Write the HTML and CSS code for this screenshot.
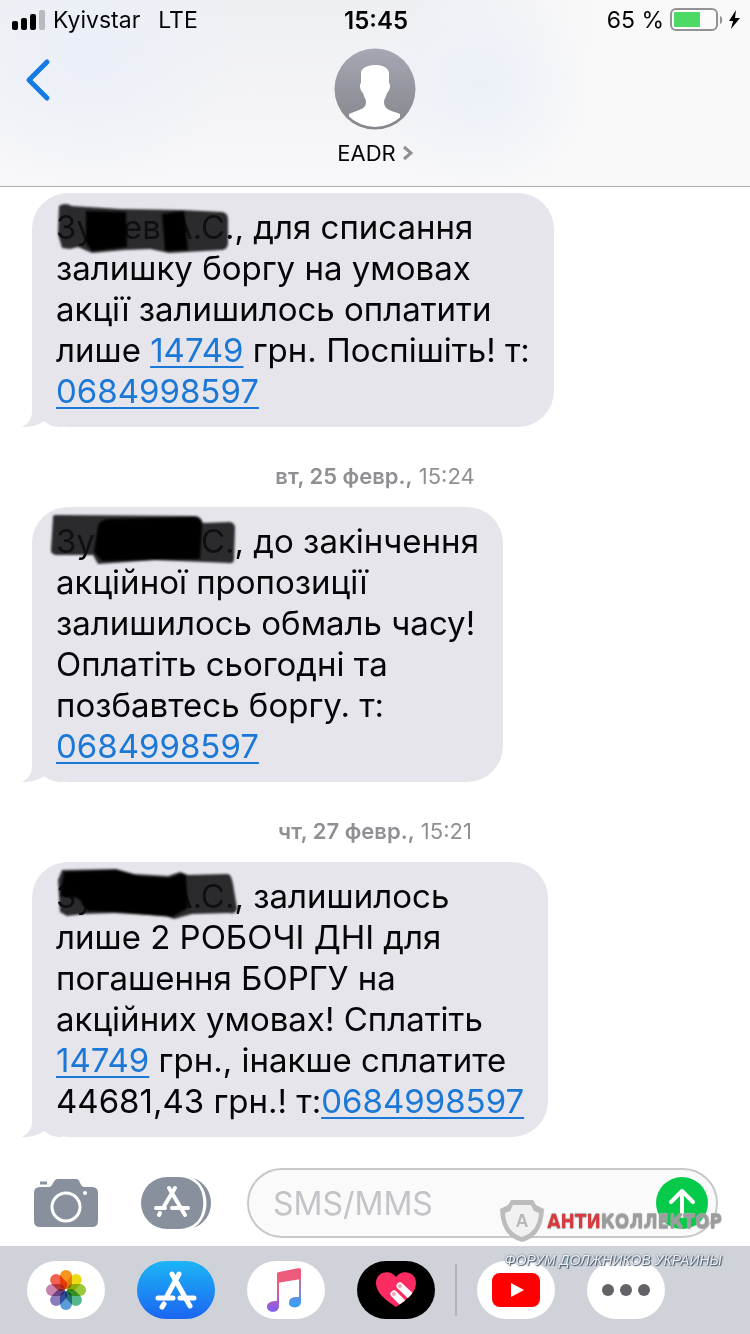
FILE: index.html
```html
<!DOCTYPE html>
<html lang="uk">
<head>
    <meta charset="UTF-8">
    <meta name="viewport" content="width=device-width, initial-scale=1.0">
    <title>EADR</title>
    <link rel="stylesheet" href="styles.css">
</head>
<body>

    <header class="header">
        <div class="status-bar">
            <div class="status-left">
                <svg class="signal" width="33" height="20" viewBox="0 0 33 20">
                    <rect x="0" y="11" width="6" height="9" rx="2"/>
                    <rect x="9" y="8" width="6" height="12" rx="2"/>
                    <rect x="18" y="4" width="6" height="16" rx="2"/>
                    <rect x="27" y="0" width="6" height="20" rx="2" fill="#b9babd"/>
                </svg>
                <span>Kyivstar</span>
                <span class="network">LTE</span>
            </div>
            <div class="status-time">15:45</div>
            <div class="status-right">
                <span>65 %</span>
                <svg width="70" height="24" viewBox="0 0 70 24">
                    <rect x="1" y="1" width="46" height="21" rx="5" fill="#fbfbfb" stroke="#939396" stroke-width="2"/>
                    <rect x="4" y="4" width="26" height="15" rx="1" fill="#4cd964"/>
                    <path d="M50 8c3 1 3 7 0 8z" fill="#939396"/>
                    <path d="M66 2l-7 11h4l-2 8 9-11h-5z"/>
                </svg>
            </div>
        </div>
        <div class="nav">
            <button class="back" aria-label="Назад">
                <svg width="26" height="44" viewBox="0 0 26 44"><path d="M22 4L4 22l18 18" fill="none" stroke="#147ae6" stroke-width="5" stroke-linecap="round" stroke-linejoin="round"/></svg>
            </button>
            <a class="contact" href="#">
                <svg width="82" height="82" viewBox="0 0 82 82">
                    <defs>
                        <linearGradient id="avatar" x1="0" y1="0" x2="0" y2="1">
                            <stop offset="0" stop-color="#a5a7b3"/>
                            <stop offset="1" stop-color="#85868c"/>
                        </linearGradient>
                        <clipPath id="avatarClip"><circle cx="41" cy="41" r="38"/></clipPath>
                    </defs>
                    <circle cx="41" cy="41" r="40.5" fill="url(#avatar)"/>
                    <path clip-path="url(#avatarClip)" fill="#fff" d="M27 24c2-9 27-10 28 1v10c2 1 1 8-2 10-1 4-3 6-3 9 0 7 5 8 16 12v17H15V66c12-5 17-5 17-12 0-3-2-5-3-9-3-2-4-9-2-10z"/>
                </svg>
                <span class="contact-name">EADR
                    <svg width="11" height="16" viewBox="0 0 11 16"><path d="M2 2l7 6-7 6" fill="none" stroke="#8e8e93" stroke-width="3"/></svg>
                </span>
            </a>
        </div>
    </header>

    <main class="messages">
        <div class="bubble">
            <svg class="tail" width="40" height="34" viewBox="0 0 40 34"><path d="M10 0v19c0 7-4 12-10 15 8 0 15-1 22-6 5 4 10 6 18 6V0z" fill="#e6e5eb"/></svg>
            <span class="name"><span>Зу</span><span>ев А.С.,</span>
                <svg class="marker" width="190" height="60" viewBox="0 0 190 60">
                    <path class="ink" d="M9 7Q15 3 22 7L70 10 132 11 172 13Q178 14 178 20V45Q177 51 171 51L119 54 100 50 74 51 42 54 28 48 20 50 12 49 8 35z"/>
                    <path class="ink-dark" d="M36 12L76 13 77 48 42 52 36 44zM112 15L134 12 138 51 115 52z"/>
                </svg></span> для списання<br>
            залишку боргу на умовах<br>
            акції залишилось оплатити<br>
            лише <a href="#">14749</a> грн. Поспішіть! т:<br>
            <a href="tel:0684998597">0684998597</a>
        </div>

        <time class="date"><b>вт, 25 февр.,</b> 15:24</time>

        <div class="bubble">
            <svg class="tail" width="40" height="34" viewBox="0 0 40 34"><path d="M10 0v19c0 7-4 12-10 15 8 0 15-1 22-6 5 4 10 6 18 6V0z" fill="#e6e5eb"/></svg>
            <span class="name"><span>Зу</span><span>С.,</span>
                <svg class="marker" width="190" height="60" viewBox="0 0 190 60">
                    <path class="ink" d="M3 5Q2 2 6 2L146 3Q151 4 153 10L180 9Q185 10 185 15L184 47Q183 51 178 50L105 47 48 51 43 42 6 42Q0 41 1 36z"/>
                    <path class="ink-dark" d="M48 13Q49 7 60 6L145 4Q152 6 152 12L150 46 52 48 44 39z"/>
                </svg></span> до закінчення<br>
            акційної пропозиції<br>
            залишилось обмаль часу!<br>
            Оплатіть сьогодні та<br>
            позбавтесь боргу. т:<br>
            <a href="tel:0684998597">0684998597</a>
        </div>

        <time class="date"><b>чт, 27 февр.,</b> 15:21</time>

        <div class="bubble">
            <svg class="tail" width="40" height="34" viewBox="0 0 40 34"><path d="M10 0v19c0 7-4 12-10 15 8 0 15-1 22-6 5 4 10 6 18 6V0z" fill="#e6e5eb"/></svg>
            <span class="name"><span>Зу</span><span>А.С.,</span>
                <svg class="marker" width="190" height="60" viewBox="0 0 190 60">
                    <path class="ink" d="M12 2L66 1 84 6 118 8 130 4 138 7 178 6Q181 6 183 16L187 40Q187 47 178 45L142 46 124 51 116 48 64 45 34 46 17 48 10 44 8 12z"/>
                    <path class="ink-dark" d="M14 4L66 2 88 8 120 10 132 5 136 8 138 40 122 49 65 44 38 43 28 30 10 28z"/>
                </svg></span> залишилось<br>
            лише 2 РОБОЧІ ДНІ для<br>
            погашення БОРГУ на<br>
            акційних умовах! Сплатіть<br>
            <a href="#">14749</a> грн., інакше сплатите<br>
            44681,43 грн.! т:<a href="tel:0684998597">0684998597</a>
        </div>
    </main>

    <footer class="footer">
        <form class="compose">
            <button type="button" class="icon-button" aria-label="Камера">
                <svg width="64" height="50" viewBox="0 0 64 50">
                    <path fill="#87909c" d="M6 9h9c4 0 4-8 9-8h18c5 0 3 8 9 8h7q6 0 6 6v28q0 6-6 6H6q-6 0-6-6V15q0-6 6-6z"/>
                    <path d="M6 5h7" stroke="#87909c" stroke-width="3"/>
                    <circle cx="32" cy="29" r="14" fill="none" stroke="#fff" stroke-width="3"/>
                    <circle cx="51" cy="15" r="2" fill="#fff"/>
                </svg>
            </button>
            <button type="button" class="icon-button" aria-label="Приложения">
                <svg width="70" height="52" viewBox="0 0 70 52">
                    <rect width="64" height="52" rx="26" fill="#87909c"/>
                    <path d="M50 0c19 8 19 44 0 52" fill="none" stroke="#fff" stroke-width="4"/>
                    <path d="M52 1c24 8 24 42 0 50 18-10 18-40 0-50z" fill="#87909c"/>
                    <path d="M34 11L22 31M28 11l16 27M15 31h9M31 31h16M19 36l-1 2" fill="none" stroke="#fff" stroke-width="4" stroke-linecap="round"/>
                </svg>
            </button>
            <div class="field">
                <input type="text" placeholder="SMS/MMS" aria-label="SMS/MMS">
                <button type="button" class="send" aria-label="Отправить">
                    <svg width="28" height="30" viewBox="0 0 28 30"><path d="M14 28V3M3 14L14 3l11 11" fill="none" stroke="#fff" stroke-width="4" stroke-linecap="round" stroke-linejoin="round"/></svg>
                </button>
            </div>
        </form>

        <nav class="apps">
            <button class="app" aria-label="Фото">
                <svg width="42" height="42" viewBox="-21 -21 42 42">
                    <g class="petals">
                        <rect x="-6" y="-20" width="12" height="19" rx="6" fill="#f7941d"/>
                        <rect x="-6" y="-20" width="12" height="19" rx="6" fill="#ecdb12" transform="rotate(45)"/>
                        <rect x="-6" y="-20" width="12" height="19" rx="6" fill="#98c93c" transform="rotate(90)"/>
                        <rect x="-6" y="-20" width="12" height="19" rx="6" fill="#56b78b" transform="rotate(135)"/>
                        <rect x="-6" y="-20" width="12" height="19" rx="6" fill="#5b9bd8" transform="rotate(180)"/>
                        <rect x="-6" y="-20" width="12" height="19" rx="6" fill="#8b7dbd" transform="rotate(225)"/>
                        <rect x="-6" y="-20" width="12" height="19" rx="6" fill="#c684b1" transform="rotate(270)"/>
                        <rect x="-6" y="-20" width="12" height="19" rx="6" fill="#ef6350" transform="rotate(315)"/>
                    </g>
                </svg>
            </button>
            <button class="app app-store" aria-label="App Store">
                <svg width="44" height="40" viewBox="0 0 44 40"><path d="M25 4L13 26M18 4l18 32M4 28h15M26 28h14M10 34l-2 3" fill="none" stroke="#fff" stroke-width="5" stroke-linecap="round"/></svg>
            </button>
            <button class="app" aria-label="Музыка">
                <svg width="38" height="46" viewBox="0 0 38 46">
                    <defs>
                        <linearGradient id="noteLeft" x1="0" y1="0" x2="0" y2="1">
                            <stop offset="0.3" stop-color="#ee5c7c"/>
                            <stop offset="1" stop-color="#7c5df5"/>
                        </linearGradient>
                        <linearGradient id="noteRight" x1="0" y1="0" x2="0" y2="1">
                            <stop offset="0.2" stop-color="#d8649c"/>
                            <stop offset="0.9" stop-color="#3d9df0"/>
                        </linearGradient>
                    </defs>
                    <path d="M10 6h2v33c0 8-12 7-12 1 0-5 5-6 10-6z" fill="url(#noteLeft)"/>
                    <path d="M32 2h2v33c0 7-12 7-12 1 0-6 5-6 10-6z" fill="url(#noteRight)"/>
                    <path d="M10 7q0-2 2-2l20-4q2 0 2 2v9l-24 4z" fill="#ee5c7c"/>
                </svg>
            </button>
            <button class="app digital-touch" aria-label="Digital Touch">
                <svg width="44" height="38" viewBox="0 0 44 38">
                    <defs><clipPath id="heart"><path d="M22 36C10 28 2 21 2 12 2 0 17-2 22 6c5-8 20-6 20 6 0 9-8 16-20 24z"/></clipPath></defs>
                    <g clip-path="url(#heart)">
                        <path d="M0 0h44v38H0z" fill="#fc2c63"/>
                        <path d="M26 15l18 17M20 23l16 16" stroke="#fff" stroke-width="7" stroke-linecap="round"/>
                        <circle cx="26" cy="15" r="2" fill="#f5a3b7"/>
                        <circle cx="20" cy="23" r="2" fill="#f5a3b7"/>
                    </g>
                </svg>
            </button>
            <span class="divider"></span>
            <button class="app" aria-label="YouTube">
                <svg width="48" height="34" viewBox="0 0 48 34"><rect width="48" height="34" rx="8" fill="#f00"/><path d="M19 10l13 7-13 7z" fill="#fff"/></svg>
            </button>
            <button class="app" aria-label="Ещё">
                <svg width="48" height="12" viewBox="0 0 48 12" fill="#636367"><circle cx="6" cy="6" r="6"/><circle cx="24" cy="6" r="6"/><circle cx="42" cy="6" r="6"/></svg>
            </button>
        </nav>

        <div class="watermark">
            <div class="watermark-title">
                <svg width="46" height="44" viewBox="0 0 46 44">
                    <path d="M12 1h22l3 5 8 4C44 28 38 39 23 43 8 39 2 28 1 10l8-4z" fill="#bcbcbe"/>
                    <path d="M14 6h18l3 6 5 2c-1 13-6 20-17 24C12 34 7 27 6 14l5-2z" fill="#f1f1f2"/>
                    <text x="23" y="28" text-anchor="middle">А</text>
                </svg>
                <span class="brand"><span class="brand-red">АНТИ</span>КОЛЛЕКТОР</span>
            </div>
            <div class="watermark-text">ФОРУМ ДОЛЖНИКОВ УКРАИНЫ</div>
        </div>
    </footer>

</body>
</html>
```

FILE: styles.css
```css
* {
    box-sizing: border-box;
}
body {
    display: flex;
    flex-direction: column;
    min-height: 100vh;
    margin: 0;
    font-family: Inter, "Liberation Sans", sans-serif;
    color: #050507;
    background-color: #fff;
}
svg {
    display: block;
    flex: none;
}
button {
    padding: 0;
    border: none;
    background: none;
    cursor: pointer;
}

/* header */
.header {
    height: 187px;
    border-bottom: 1px solid #acadb0;
    background: radial-gradient(circle at 64% 45%, #ebf0f8, transparent 22%),
                radial-gradient(circle at 12% 24%, #ebeff8, transparent 22%),
                linear-gradient(90deg, transparent 55%, #f9f9fa 80%),
                linear-gradient(#eeeff3, #f8f8fa);
}
.status-bar {
    display: grid;
    grid-template-columns: 1fr auto 1fr;
    align-items: center;
    height: 40px;
    padding: 0 10px 0 12px;
    font-size: 23px;
}
.status-left,
.status-right {
    display: flex;
    align-items: center;
    gap: 8px;
}
.status-right {
    justify-content: flex-end;
    gap: 6px;
}
.network {
    margin-left: 10px;
}
.status-time {
    font-size: 24px;
    font-weight: 600;
}
.nav {
    display: grid;
    grid-template-columns: 1fr auto 1fr;
    align-items: start;
    padding: 8px 25px 0;
}
.back {
    justify-self: start;
    margin-top: 10px;
}
.contact {
    display: flex;
    flex-direction: column;
    align-items: center;
    gap: 10px;
    color: inherit;
    text-decoration: none;
}
.contact-name {
    display: flex;
    align-items: center;
    gap: 6px;
    font-size: 22px;
    line-height: 26px;
}

/* messages */
.messages {
    flex: 1;
    display: flex;
    flex-direction: column;
    align-items: flex-start;
    padding: 6px 32px 0;
}
.bubble {
    position: relative;
    z-index: 0;
    padding: 14px 24px 15px;
    border-radius: 36px;
    background-color: #e6e5eb;
    font-size: 33px;
    line-height: 41px;
    white-space: nowrap;
}
.bubble a {
    color: #1b78d6;
    text-decoration-thickness: 2px;
    text-underline-offset: 4px;
}
.tail {
    position: absolute;
    z-index: -1;
    left: -10px;
    bottom: 0;
}
.name {
    position: relative;
    display: inline-flex;
    justify-content: space-between;
    width: 188px;
}
.marker {
    position: absolute;
    left: -6px;
    top: -8px;
    filter: blur(1px);
}
.ink {
    fill: #111113;
    fill-opacity: 0.88;
}
.ink-dark {
    fill: #000;
}
.date {
    align-self: center;
    padding: 35px 0 17px;
    font-size: 22px;
    line-height: 28px;
    color: #8f8f94;
}
.date b {
    font-weight: 600;
}

/* bottom bars */
.footer {
    position: relative;
}
.compose {
    display: flex;
    align-items: center;
    height: 86px;
    padding: 0 32px 0 34px;
    gap: 36px;
}
.icon-button + .icon-button {
    margin-left: 7px;
}
.field {
    flex: 1;
    display: flex;
    align-items: center;
    min-width: 0;
    height: 70px;
    padding: 0 8px 0 24px;
    border: 2px solid #c8c8cc;
    border-radius: 35px;
    background-color: #fafafb;
}
.field input {
    flex: 1;
    min-width: 0;
    padding: 0;
    border: none;
    outline: none;
    background: none;
    font-family: inherit;
    font-size: 32px;
}
.field input::placeholder {
    color: #c4c4c8;
}
.send {
    display: flex;
    flex: none;
    align-items: center;
    justify-content: center;
    width: 52px;
    height: 52px;
    border-radius: 50%;
    background-color: #06ca49;
}
.apps {
    display: flex;
    align-items: center;
    gap: 32px;
    height: 88px;
    padding: 0 27px;
    background-color: #d0d2da;
}
.app {
    display: flex;
    align-items: center;
    justify-content: center;
    width: 78px;
    height: 58px;
    border-radius: 29px;
    background-color: #fff;
}
.app-store {
    background: linear-gradient(#1cb5f5, #1b65f2);
}
.digital-touch {
    background-color: #000;
}
.petals rect {
    mix-blend-mode: multiply;
}
.divider {
    width: 2px;
    height: 52px;
    margin: 0 -12px;
    background-color: #b2b4bc;
}

/* watermark over both bars */
.watermark {
    position: absolute;
    right: 28px;
    top: 39px;
    pointer-events: none;
}
.watermark-title {
    display: flex;
    align-items: center;
    gap: 2px;
}
.watermark-title text {
    font: bold 18px "Liberation Sans", sans-serif;
    fill: #b9b9bb;
}
.brand {
    font-family: "Liberation Sans Narrow", "DejaVu Sans Condensed", "Liberation Sans", sans-serif;
    font-size: 19px;
    font-weight: bold;
    color: #9b9c9c;
    text-shadow: 0 1px 1px #aaa, 0 -1px 1px #aaa;
}
.brand-red {
    color: #d93a3e;
}
.watermark-text {
    margin-top: 7px;
    font: italic 14px "Liberation Sans", sans-serif;
    line-height: 20px;
    text-align: right;
    color: #eceef2;
    text-shadow: 0 0 2px #465a6b, 1px 1px 1px #465a6b;
}
```
